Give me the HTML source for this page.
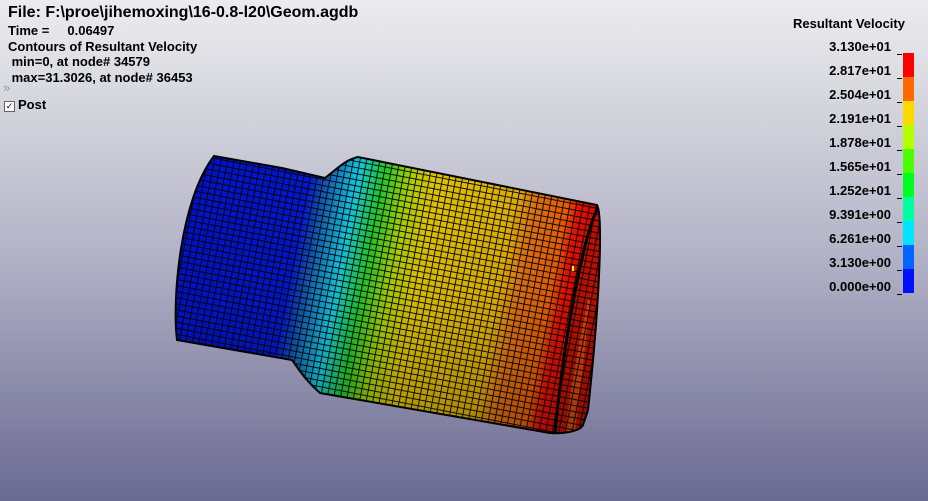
<!DOCTYPE html>
<html><head><meta charset="utf-8"><style>
html,body{margin:0;padding:0}
body{width:928px;height:501px;overflow:hidden;position:relative;font-family:"Liberation Sans",Arial,sans-serif;font-weight:bold;color:#000;
background:linear-gradient(180deg,#ececef 0%,#d6d6de 20%,#b4b4c8 50%,#8e8eac 75%,#6b6a92 100%);}
.t{position:absolute;left:8px;font-size:13px;white-space:pre;line-height:15px}
.l{position:absolute;right:37px;font-size:13px;line-height:15px;text-align:right}
.tk{position:absolute;left:897px;width:5px;height:1px;background:#000}
.b{position:absolute;left:903px;width:11px;height:24px}
</style></head><body>
<div style="position:absolute;left:8px;top:4px;font-size:16px;line-height:18px;white-space:nowrap">File: F:\proe\jihemoxing\16-0.8-l20\Geom.agdb</div>
<div class="t" style="top:23px">Time =     0.06497</div>
<div class="t" style="top:39px">Contours of Resultant Velocity</div>
<div class="t" style="top:54px"> min=0, at node# 34579</div>
<div class="t" style="top:70px"> max=31.3026, at node# 36453</div>
<div style="position:absolute;left:3px;top:80px;font-size:13px;color:#999;font-weight:normal">&#187;</div>
<div style="position:absolute;left:4px;top:101px;width:9px;height:9px;border:1px solid #666;background:#fff;font-size:9px;line-height:9px;text-align:center;font-weight:normal">&#10003;</div>
<div class="t" style="left:18px;top:97px">Post</div>

<div style="position:absolute;left:793px;top:16px;font-size:13px">Resultant Velocity</div>
<div class="l" style="top:39px">3.130e+01</div>
<div class="l" style="top:63px">2.817e+01</div>
<div class="l" style="top:87px">2.504e+01</div>
<div class="l" style="top:111px">2.191e+01</div>
<div class="l" style="top:135px">1.878e+01</div>
<div class="l" style="top:159px">1.565e+01</div>
<div class="l" style="top:183px">1.252e+01</div>
<div class="l" style="top:207px">9.391e+00</div>
<div class="l" style="top:231px">6.261e+00</div>
<div class="l" style="top:255px">3.130e+00</div>
<div class="l" style="top:279px">0.000e+00</div>
<div class="tk" style="top:54px"></div><div class="tk" style="top:78px"></div><div class="tk" style="top:102px"></div><div class="tk" style="top:126px"></div><div class="tk" style="top:150px"></div><div class="tk" style="top:174px"></div><div class="tk" style="top:198px"></div><div class="tk" style="top:222px"></div><div class="tk" style="top:246px"></div><div class="tk" style="top:270px"></div><div class="tk" style="top:294px"></div>
<div class="b" style="top:53px;background:#ff0000"></div>
<div class="b" style="top:77px;background:#ff6a00"></div>
<div class="b" style="top:101px;background:#ffd800"></div>
<div class="b" style="top:125px;background:#b6ff00"></div>
<div class="b" style="top:149px;background:#4cff00"></div>
<div class="b" style="top:173px;background:#00ff21"></div>
<div class="b" style="top:197px;background:#00ffa0"></div>
<div class="b" style="top:221px;background:#00e4ff"></div>
<div class="b" style="top:245px;background:#0066ff"></div>
<div class="b" style="top:269px;background:#0010ff"></div>

<svg width="928" height="501" style="position:absolute;left:0;top:0">
<defs>
<linearGradient id="g" gradientUnits="userSpaceOnUse" x1="177" y1="250" x2="600" y2="330">
<stop offset="0" stop-color="#0012c8"/>
<stop offset="0.27" stop-color="#0018d0"/>
<stop offset="0.31" stop-color="#1058b0"/>
<stop offset="0.38" stop-color="#10c8e0"/>
<stop offset="0.44" stop-color="#20c828"/>
<stop offset="0.5" stop-color="#a8d000"/>
<stop offset="0.56" stop-color="#e0c400"/>
<stop offset="0.75" stop-color="#e0b000"/>
<stop offset="0.8" stop-color="#e07010"/>
<stop offset="0.87" stop-color="#e86000"/>
<stop offset="0.9" stop-color="#e81000"/>
<stop offset="1" stop-color="#c80000"/>
</linearGradient>
<linearGradient id="sh" x1="0" y1="0" x2="0" y2="1">
<stop offset="0" stop-color="#000" stop-opacity="0"/>
<stop offset="0.5" stop-color="#000" stop-opacity="0.05"/>
<stop offset="1" stop-color="#000" stop-opacity="0.25"/>
</linearGradient>
<pattern id="m" width="6.5" height="6" patternUnits="userSpaceOnUse" patternTransform="rotate(11)">
<path d="M0 0.5H7M0.5 0V6" stroke="#000" stroke-width="1" fill="none" opacity="0.9"/>
</pattern>
<clipPath id="c"><path d="M214,156 L282,168 L325,178 C338,168 345,160 358,157 L597,205 C603,215 600,300 588,410 L583,425 C580,432 560,434 550,433 L320,393 C305,380 298,368 292,360 L177,340 C172,300 180,200 214,156 Z"/></clipPath>
</defs>
<g clip-path="url(#c)">
<rect x="170" y="150" width="440" height="290" fill="url(#g)"/>
<path d="M598,208 C585,230 565,330 555,432 L600,432 L600,205 Z" fill="#c01000"/>
<path d="M588,300 C580,340 572,380 565,432 L575,432 C580,390 585,350 590,300 Z" fill="#e06010" opacity="0.7"/>
<rect x="170" y="150" width="440" height="290" fill="url(#sh)"/>
<rect x="170" y="150" width="440" height="290" fill="url(#m)"/>
</g>
<path d="M598,208 C585,230 565,330 555,432" stroke="#000" stroke-width="3" fill="none"/>
<path d="M214,156 L282,168 L325,178 C338,168 345,160 358,157 L597,205 C603,215 600,300 588,410 L583,425 C580,432 560,434 550,433 L320,393 C305,380 298,368 292,360 L177,340 C172,300 180,200 214,156 Z" stroke="#000" stroke-width="2" fill="none"/>
<rect x="572" y="266" width="2" height="5" fill="#ffff00"/>
</svg>
</body></html>
